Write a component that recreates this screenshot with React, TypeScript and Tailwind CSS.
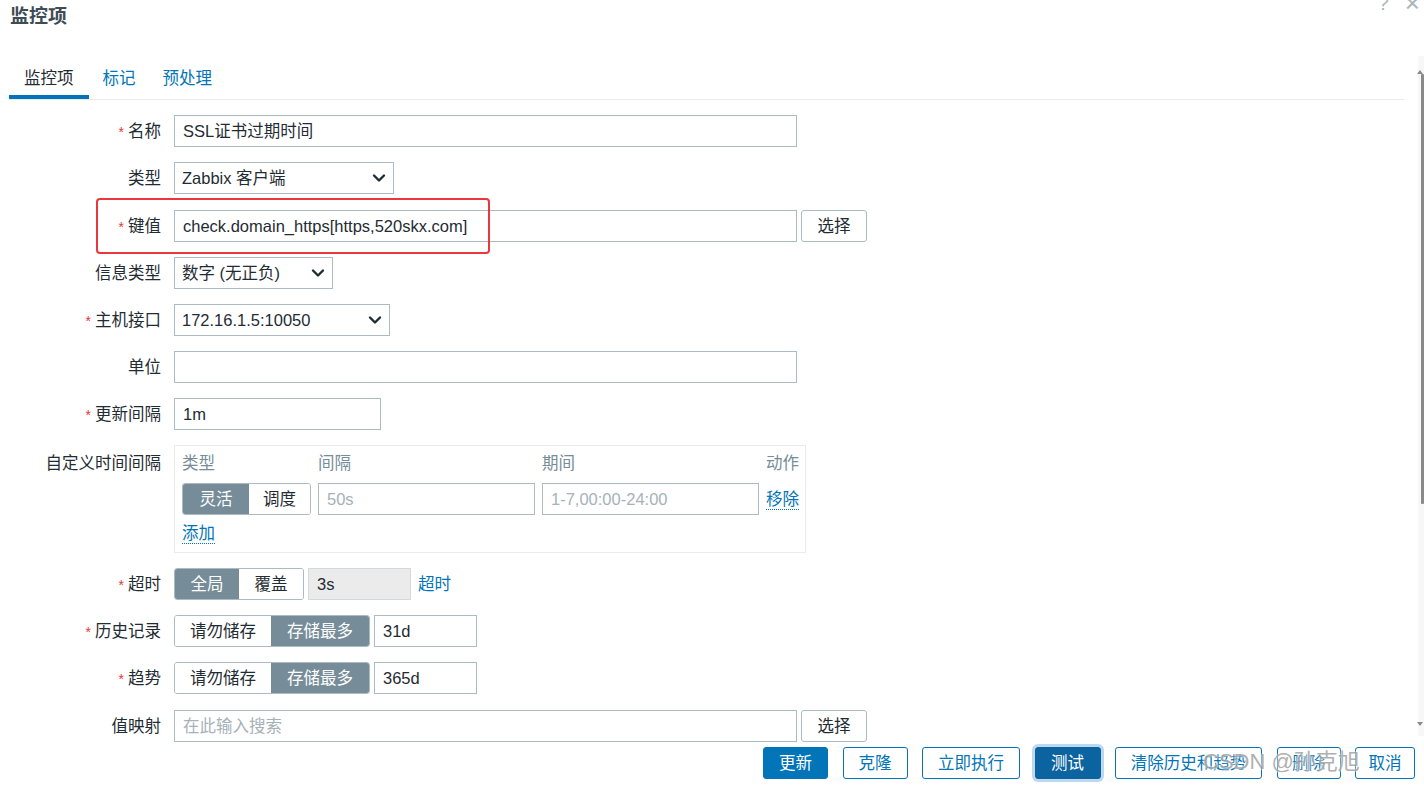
import React from "react";

const FONT = "font-['Liberation_Sans','Noto_Sans_CJK_SC',sans-serif]";

function Chevron() {
  return (
    <svg width="14" height="10" viewBox="0 0 14 10" className="shrink-0">
      <polyline points="2,2.5 7,7.5 12,2.5" fill="none" stroke="#1f2c33" strokeWidth="2.4" strokeLinecap="round" strokeLinejoin="round" />
    </svg>
  );
}

function Row({ label, required, children, top }: { label: string; required?: boolean; children: React.ReactNode; top?: boolean }) {
  return (
    <div className={`flex ${top ? "items-start" : "items-center"}`}>
      <div className={`w-[165px] shrink-0 pr-[13px] text-right text-[16.5px] text-[#1f2c33] leading-[20px] ${top ? "pt-[8px]" : ""}`}>
        {required && <span className="text-[#e33734] mr-[4px] text-[14px]">*</span>}
        {label}
      </div>
      <div className="flex items-center gap-[4px]">{children}</div>
    </div>
  );
}

function Input({ w, value, placeholder, disabled }: { w: string; value?: string; placeholder?: string; disabled?: boolean }) {
  return (
    <div className={`${w} h-[32px] border ${disabled ? "bg-[#ebebeb] border-[#d2dadd]" : "bg-white border-[#acbbc2]"} px-[8px] flex items-center text-[16.5px] leading-[20px] whitespace-nowrap overflow-hidden ${value ? "text-[#1f2c33]" : "text-[#a6b2b8]"}`}>
      {value ?? placeholder}
    </div>
  );
}

function Select({ w, value }: { w: string; value: string }) {
  return (
    <div className={`${w} h-[32px] border border-[#acbbc2] bg-white pl-[7px] pr-[7px] flex items-center justify-between text-[16.5px] leading-[20px] text-[#1f2c33]`}>
      <span>{value}</span>
      <Chevron />
    </div>
  );
}

function Toggle({ items, active, widths }: { items: string[]; active: number; widths: string[] }) {
  return (
    <div className="flex h-[32px] border border-[#acbbc2] rounded-[3px] overflow-hidden">
      {items.map((it, i) => (
        <div
          key={it}
          className={`${widths[i]} flex items-center justify-center text-[16.5px] leading-[20px] ${i === active ? "bg-[#768d99] text-white" : "bg-white text-[#1f2c33]"}`}
        >
          {it}
        </div>
      ))}
    </div>
  );
}

function SmallButton({ label }: { label: string }) {
  return (
    <div className="w-[66px] h-[32px] border border-[#acbbc2] rounded-[3px] bg-white flex items-center justify-center text-[16.5px] leading-[20px] text-[#1f2c33]">
      {label}
    </div>
  );
}

function FootButton({ label, w, variant }: { label: string; w: string; variant?: "primary" | "focus" }) {
  const base = `${w} h-[32px] rounded-[3px] flex items-center justify-center text-[16.5px] leading-[20px] border`;
  if (variant === "primary") return <div className={`${base} bg-[#0275b8] border-[#0275b8] text-white`}>{label}</div>;
  if (variant === "focus")
    return <div className={`${base} bg-[#0b63a0] border-[#0b63a0] text-white shadow-[0_0_0_3px_#bcd9ef]`}>{label}</div>;
  return <div className={`${base} bg-white border-[#0275b8] text-[#0275b8]`}>{label}</div>;
}

export default function App() {
  return (
    <div className={`${FONT} relative w-[1424px] h-[788px] bg-white overflow-hidden flex flex-col`}>
      {/* header */}
      <div className="h-[56px] shrink-0 flex justify-between items-start">
        <div className="pl-[10px] pt-[4px] text-[19px] leading-[26px] font-bold text-[#3e4c55]">监控项</div>
        <div className="flex items-start gap-[16px] pr-[4px] -mt-[10px] text-[#aab6bd]">
          <span className="text-[20px] leading-[26px]">?</span>
          <span className="text-[26px] leading-[26px]">×</span>
        </div>
      </div>

      <div className="flex-1 flex overflow-hidden">
        <div className="w-[1404px] pl-[9px] shrink-0">
          {/* tabs */}
          <div className="flex items-end h-[44px] border-b border-[#ebebeb]">
            <div className="px-[15px] pb-[7px] border-b-[4px] border-[#0275b8] text-[16.5px] leading-[20px] text-[#1f2c33]">监控项</div>
            <div className="px-[14px] pb-[11px] text-[16.5px] leading-[20px] text-[#0275b8]">标记</div>
            <div className="px-[13px] pb-[11px] text-[16.5px] leading-[20px] text-[#0275b8]">预处理</div>
          </div>

          {/* form */}
          <div className="pt-[15px] flex flex-col gap-[15px]">
            <Row label="名称" required>
              <Input w="w-[623px]" value="SSL证书过期时间" />
            </Row>
            <Row label="类型">
              <Select w="w-[220px]" value="Zabbix 客户端" />
            </Row>
            <div className="mt-[1px]">
              <Row label="键值" required>
                <Input w="w-[623px]" value="check.domain_https[https,520skx.com]" />
                <SmallButton label="选择" />
              </Row>
            </div>
            <Row label="信息类型">
              <Select w="w-[159px]" value="数字 (无正负)" />
            </Row>
            <Row label="主机接口" required>
              <Select w="w-[216px]" value="172.16.1.5:10050" />
            </Row>
            <Row label="单位">
              <Input w="w-[623px]" value="" />
            </Row>
            <Row label="更新间隔" required>
              <Input w="w-[207px]" value="1m" />
            </Row>
            <Row label="自定义时间间隔" top>
              <div className="w-[632px] h-[108px] border border-[#ebebeb] pl-[7px] pr-[6px] pt-[7px]">
                <div className="flex gap-[7px] text-[16.5px] leading-[20px] text-[#768d99] h-[20px]">
                  <div className="w-[129px]">类型</div>
                  <div className="w-[217px]">间隔</div>
                  <div className="w-[217px]">期间</div>
                  <div className="flex-1 text-right">动作</div>
                </div>
                <div className="flex gap-[7px] items-center mt-[10px]">
                  <Toggle items={["灵活", "调度"]} active={0} widths={["w-[66px]", "w-[61px]"]} />
                  <Input w="w-[217px]" placeholder="50s" />
                  <Input w="w-[217px]" placeholder="1-7,00:00-24:00" />
                  <span className="text-[16.5px] leading-[20px] text-[#0275b8] border-b border-dotted border-[#0275b8]">移除</span>
                </div>
                <div className="mt-[8px] flex">
                  <span className="text-[16.5px] leading-[20px] text-[#0275b8] border-b border-dotted border-[#0275b8]">添加</span>
                </div>
              </div>
            </Row>
            <Row label="超时" required>
              <Toggle items={["全局", "覆盖"]} active={0} widths={["w-[64px]", "w-[64px]"]} />
              <Input w="w-[103px]" value="3s" disabled />
              <span className="ml-[3px] text-[16.5px] leading-[20px] text-[#0275b8]">超时</span>
            </Row>
            <Row label="历史记录" required>
              <Toggle items={["请勿储存", "存储最多"]} active={1} widths={["w-[96px]", "w-[98px]"]} />
              <Input w="w-[103px]" value="31d" />
            </Row>
            <Row label="趋势" required>
              <Toggle items={["请勿储存", "存储最多"]} active={1} widths={["w-[96px]", "w-[98px]"]} />
              <Input w="w-[103px]" value="365d" />
            </Row>
            <div className="mt-[1px]">
              <Row label="值映射">
                <Input w="w-[623px]" placeholder="在此输入搜索" />
                <SmallButton label="选择" />
              </Row>
            </div>
          </div>
        </div>

        {/* scrollbar */}
        <div className="ml-auto w-[6px] h-[680px] bg-[#f7f7f7] flex flex-col items-end">
          <div className="h-[18px] flex items-end justify-end pr-[1px]">
            <div className="w-0 h-0 border-l-[3px] border-r-[3px] border-b-[4px] border-l-transparent border-r-transparent border-b-[#8a8a8a]" />
          </div>
          <div className="w-[3px] h-[430px] bg-[#8a8a8a] rounded-[1px]" />
          <div className="flex-1" />
          <div className="h-[14px] flex items-start justify-end pr-[1px]">
            <div className="w-0 h-0 border-l-[3px] border-r-[3px] border-t-[4px] border-l-transparent border-r-transparent border-t-[#8a8a8a]" />
          </div>
        </div>
      </div>

      {/* footer */}
      <div className="h-[46px] shrink-0 flex items-start justify-end gap-[14.5px] pr-[9px] pt-[5px]">
        <FootButton label="更新" w="w-[65px]" variant="primary" />
        <FootButton label="克隆" w="w-[65px]" />
        <FootButton label="立即执行" w="w-[98px]" />
        <FootButton label="测试" w="w-[66px]" variant="focus" />
        <FootButton label="清除历史和趋势" w="w-[147px]" />
        <FootButton label="删除" w="w-[64px]" />
        <FootButton label="取消" w="w-[60px]" />
      </div>

      {/* annotation box */}
      <div className="absolute left-[96px] top-[198px] w-[394px] h-[56px] border-2 border-[#e8383d] rounded-[4px] pointer-events-none" />

      {/* watermark */}
      <div className="absolute left-[1203px] top-[748px] text-[22px] leading-[28px] text-[#a3a3a3] opacity-85 [text-shadow:0_0_2px_#ffffff,0_0_2px_#ffffff] pointer-events-none whitespace-nowrap">
        CSDN @孙克旭
      </div>
    </div>
  );
}
